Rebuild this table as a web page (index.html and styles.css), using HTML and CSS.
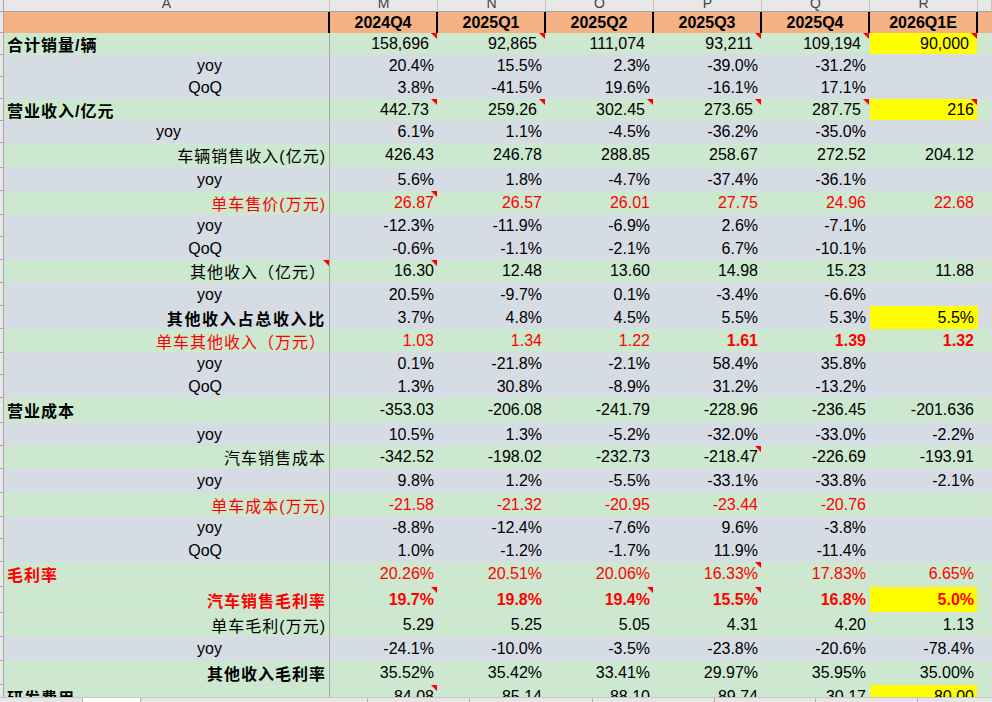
FILE: index.html
```html
<!DOCTYPE html>
<html lang="zh-CN">
<head>
<meta charset="utf-8">
<title>Sheet</title>
<link rel="stylesheet" href="styles.css">
</head>
<body>
<div class="app">
  <div class="sheet">
    <div class="row colhead">
      <div class="rh"></div>
      <div class="c"><span>A</span></div>
      <div class="c"><span>M</span></div>
      <div class="c"><span>N</span></div>
      <div class="c"><span>O</span></div>
      <div class="c"><span>P</span></div>
      <div class="c"><span>Q</span></div>
      <div class="c"><span>R</span></div>
      <div class="c"></div>
    </div>
    <div class="row head">
      <div class="rh"></div>
      <div class="c"></div>
      <div class="c">2024Q4</div>
      <div class="c">2025Q1</div>
      <div class="c">2025Q2</div>
      <div class="c">2025Q3</div>
      <div class="c">2025Q4</div>
      <div class="c">2026Q1E</div>
      <div class="c"></div>
    </div>

    <div class="row g h22">
      <div class="rh"></div>
      <div class="c bl">合计销量/辆</div>
      <div class="c p8 t">158,696</div>
      <div class="c p8 t">92,865</div>
      <div class="c p8">111,074</div>
      <div class="c p8 t">93,211</div>
      <div class="c p8 t">109,194</div>
      <div class="c p8 t yl">90,000</div>
      <div class="c"></div>
    </div>
    <div class="row b h22">
      <div class="rh"></div>
      <div class="c y1">yoy</div>
      <div class="c">20.4%</div>
      <div class="c">15.5%</div>
      <div class="c">2.3%</div>
      <div class="c">-39.0%</div>
      <div class="c">-31.2%</div>
      <div class="c"></div>
      <div class="c"></div>
    </div>
    <div class="row b h22">
      <div class="rh"></div>
      <div class="c y1">QoQ</div>
      <div class="c">3.8%</div>
      <div class="c">-41.5%</div>
      <div class="c">19.6%</div>
      <div class="c">-16.1%</div>
      <div class="c">17.1%</div>
      <div class="c"></div>
      <div class="c"></div>
    </div>
    <div class="row g h22">
      <div class="rh"></div>
      <div class="c bl">营业收入/亿元</div>
      <div class="c p8 t">442.73</div>
      <div class="c p8 t">259.26</div>
      <div class="c p8 t">302.45</div>
      <div class="c p8 t">273.65</div>
      <div class="c p8 t">287.75</div>
      <div class="c t yl">216</div>
      <div class="c"></div>
    </div>
    <div class="row b h22">
      <div class="rh"></div>
      <div class="c y2">yoy</div>
      <div class="c">6.1%</div>
      <div class="c">1.1%</div>
      <div class="c">-4.5%</div>
      <div class="c">-36.2%</div>
      <div class="c">-35.0%</div>
      <div class="c"></div>
      <div class="c"></div>
    </div>
    <div class="row g h25">
      <div class="rh"></div>
      <div class="c lr">车辆销售收入(亿元)</div>
      <div class="c">426.43</div>
      <div class="c">246.78</div>
      <div class="c">288.85</div>
      <div class="c">258.67</div>
      <div class="c">272.52</div>
      <div class="c">204.12</div>
      <div class="c"></div>
    </div>
    <div class="row b h23">
      <div class="rh"></div>
      <div class="c y1">yoy</div>
      <div class="c">5.6%</div>
      <div class="c">1.8%</div>
      <div class="c">-4.7%</div>
      <div class="c">-37.4%</div>
      <div class="c">-36.1%</div>
      <div class="c"></div>
      <div class="c"></div>
    </div>
    <div class="row g h24 red">
      <div class="rh"></div>
      <div class="c lr">单车售价(万元)</div>
      <div class="c t">26.87</div>
      <div class="c">26.57</div>
      <div class="c">26.01</div>
      <div class="c">27.75</div>
      <div class="c">24.96</div>
      <div class="c">22.68</div>
      <div class="c"></div>
    </div>
    <div class="row b h22">
      <div class="rh"></div>
      <div class="c y1">yoy</div>
      <div class="c">-12.3%</div>
      <div class="c">-11.9%</div>
      <div class="c">-6.9%</div>
      <div class="c">2.6%</div>
      <div class="c">-7.1%</div>
      <div class="c"></div>
      <div class="c"></div>
    </div>
    <div class="row b h23">
      <div class="rh"></div>
      <div class="c y1">QoQ</div>
      <div class="c">-0.6%</div>
      <div class="c">-1.1%</div>
      <div class="c">-2.1%</div>
      <div class="c">6.7%</div>
      <div class="c">-10.1%</div>
      <div class="c"></div>
      <div class="c"></div>
    </div>
    <div class="row g h23">
      <div class="rh"></div>
      <div class="c lr t">其他收入（亿元）</div>
      <div class="c t">16.30</div>
      <div class="c">12.48</div>
      <div class="c">13.60</div>
      <div class="c">14.98</div>
      <div class="c">15.23</div>
      <div class="c">11.88</div>
      <div class="c"></div>
    </div>
    <div class="row b h23">
      <div class="rh"></div>
      <div class="c y1">yoy</div>
      <div class="c">20.5%</div>
      <div class="c">-9.7%</div>
      <div class="c">0.1%</div>
      <div class="c">-3.4%</div>
      <div class="c">-6.6%</div>
      <div class="c"></div>
      <div class="c"></div>
    </div>
    <div class="row b h23">
      <div class="rh"></div>
      <div class="c lr bw">其他收入占总收入比</div>
      <div class="c">3.7%</div>
      <div class="c">4.8%</div>
      <div class="c">4.5%</div>
      <div class="c">5.5%</div>
      <div class="c">5.3%</div>
      <div class="c yl">5.5%</div>
      <div class="c"></div>
    </div>
    <div class="row g h24 red">
      <div class="rh"></div>
      <div class="c lr">单车其他收入（万元）</div>
      <div class="c">1.03</div>
      <div class="c">1.34</div>
      <div class="c">1.22</div>
      <div class="c bo">1.61</div>
      <div class="c bo">1.39</div>
      <div class="c bo">1.32</div>
      <div class="c"></div>
    </div>
    <div class="row b h22">
      <div class="rh"></div>
      <div class="c y1">yoy</div>
      <div class="c">0.1%</div>
      <div class="c">-21.8%</div>
      <div class="c">-2.1%</div>
      <div class="c">58.4%</div>
      <div class="c">35.8%</div>
      <div class="c"></div>
      <div class="c"></div>
    </div>
    <div class="row b h23">
      <div class="rh"></div>
      <div class="c y1">QoQ</div>
      <div class="c">1.3%</div>
      <div class="c">30.8%</div>
      <div class="c">-8.9%</div>
      <div class="c">31.2%</div>
      <div class="c">-13.2%</div>
      <div class="c"></div>
      <div class="c"></div>
    </div>
    <div class="row g h25">
      <div class="rh"></div>
      <div class="c bl">营业成本</div>
      <div class="c">-353.03</div>
      <div class="c">-206.08</div>
      <div class="c">-241.79</div>
      <div class="c">-228.96</div>
      <div class="c">-236.45</div>
      <div class="c">-201.636</div>
      <div class="c"></div>
    </div>
    <div class="row b h23">
      <div class="rh"></div>
      <div class="c y1">yoy</div>
      <div class="c">10.5%</div>
      <div class="c">1.3%</div>
      <div class="c">-5.2%</div>
      <div class="c">-32.0%</div>
      <div class="c">-33.0%</div>
      <div class="c">-2.2%</div>
      <div class="c"></div>
    </div>
    <div class="row g h23">
      <div class="rh"></div>
      <div class="c lr">汽车销售成本</div>
      <div class="c">-342.52</div>
      <div class="c">-198.02</div>
      <div class="c">-232.73</div>
      <div class="c t">-218.47</div>
      <div class="c">-226.69</div>
      <div class="c">-193.91</div>
      <div class="c"></div>
    </div>
    <div class="row b h24">
      <div class="rh"></div>
      <div class="c y1">yoy</div>
      <div class="c">9.8%</div>
      <div class="c">1.2%</div>
      <div class="c">-5.5%</div>
      <div class="c">-33.1%</div>
      <div class="c">-33.8%</div>
      <div class="c">-2.1%</div>
      <div class="c"></div>
    </div>
    <div class="row g h24 red">
      <div class="rh"></div>
      <div class="c lr">单车成本(万元)</div>
      <div class="c">-21.58</div>
      <div class="c">-21.32</div>
      <div class="c">-20.95</div>
      <div class="c">-23.44</div>
      <div class="c">-20.76</div>
      <div class="c"></div>
      <div class="c"></div>
    </div>
    <div class="row b h22">
      <div class="rh"></div>
      <div class="c y1">yoy</div>
      <div class="c">-8.8%</div>
      <div class="c">-12.4%</div>
      <div class="c">-7.6%</div>
      <div class="c">9.6%</div>
      <div class="c">-3.8%</div>
      <div class="c"></div>
      <div class="c"></div>
    </div>
    <div class="row b h23">
      <div class="rh"></div>
      <div class="c y1">QoQ</div>
      <div class="c">1.0%</div>
      <div class="c">-1.2%</div>
      <div class="c">-1.7%</div>
      <div class="c">11.9%</div>
      <div class="c">-11.4%</div>
      <div class="c"></div>
      <div class="c"></div>
    </div>
    <div class="row g h25 red">
      <div class="rh"></div>
      <div class="c bl">毛利率</div>
      <div class="c">20.26%</div>
      <div class="c">20.51%</div>
      <div class="c">20.06%</div>
      <div class="c t">16.33%</div>
      <div class="c">17.83%</div>
      <div class="c">6.65%</div>
      <div class="c"></div>
    </div>
    <div class="row g h26 red bold">
      <div class="rh"></div>
      <div class="c lr">汽车销售毛利率</div>
      <div class="c t">19.7%</div>
      <div class="c">19.8%</div>
      <div class="c t">19.4%</div>
      <div class="c t">15.5%</div>
      <div class="c">16.8%</div>
      <div class="c yl">5.0%</div>
      <div class="c"></div>
    </div>
    <div class="row g h24">
      <div class="rh"></div>
      <div class="c lr">单车毛利(万元)</div>
      <div class="c">5.29</div>
      <div class="c">5.25</div>
      <div class="c">5.05</div>
      <div class="c">4.31</div>
      <div class="c">4.20</div>
      <div class="c">1.13</div>
      <div class="c"></div>
    </div>
    <div class="row b h24">
      <div class="rh"></div>
      <div class="c y1">yoy</div>
      <div class="c">-24.1%</div>
      <div class="c">-10.0%</div>
      <div class="c">-3.5%</div>
      <div class="c">-23.8%</div>
      <div class="c">-20.6%</div>
      <div class="c">-78.4%</div>
      <div class="c"></div>
    </div>
    <div class="row g h24">
      <div class="rh"></div>
      <div class="c lr bo">其他收入毛利率</div>
      <div class="c">35.52%</div>
      <div class="c">35.42%</div>
      <div class="c">33.41%</div>
      <div class="c">29.97%</div>
      <div class="c">35.95%</div>
      <div class="c">35.00%</div>
      <div class="c"></div>
    </div>
    <div class="row g h24">
      <div class="rh"></div>
      <div class="c bl">研发费用</div>
      <div class="c t">84.08</div>
      <div class="c">85.14</div>
      <div class="c">88.10</div>
      <div class="c">89.74</div>
      <div class="c">30.17</div>
      <div class="c yl">80.00</div>
      <div class="c"></div>
    </div>
  </div>
  <div class="tabs">
    <div class="tab w82"></div>
    <div class="tab active w58"></div>
    <div class="tab w228"></div>
    <div class="tab w102"></div>
    <div class="tab w123"></div>
    <div class="tab w122"></div>
    <div class="tab w101"></div>
    <div class="tab w102"></div>
    <div class="tab rest"></div>
  </div>
</div>
</body>
</html>
```

FILE: styles.css
```css
html, body {
  margin: 0;
  padding: 0;
  background: #ffffff;
}

body {
  font-family: "Liberation Sans", "Noto Sans CJK SC", sans-serif;
  font-size: 16px;
  color: #000;
}

.app {
  width: 992px;
  height: 702px;
  display: flex;
  flex-direction: column;
  overflow: hidden;
}

.sheet {
  flex: 1;
  overflow: hidden;
}

.row {
  display: grid;
  grid-template-columns: 4px 326px repeat(6, 108px) 1fr;
}

.row > div {
  box-sizing: border-box;
  position: relative;
  display: flex;
  align-items: center;
  justify-content: flex-end;
  padding-right: 3px;
  white-space: nowrap;
  overflow: hidden;
  border-right: 1px solid transparent;
}

/* row header strip at the far left */
.row > .rh {
  background: #e8e8e8;
  border-right: 1px solid #a6a6a6;
  border-bottom: 1px solid #a6a6a6;
  padding: 0;
}

/* column letter bar */
.colhead {
  height: 12px;
  background: #e8e8e8;
}
.colhead > div {
  border-bottom: 1px solid #a6a6a6;
  border-right: 1px solid #c4c4c4;
  justify-content: center;
  align-items: flex-start;
  padding: 0;
  color: #444;
  font-size: 14px;
}
.colhead > div span {
  display: block;
  line-height: 11px;
  margin-top: -2px;
}

/* orange header row */
.head {
  height: 21px;
  background: #f4b183;
  font-weight: bold;
}
.head > div {
  justify-content: center;
  padding: 0;
  border-right: 2px solid #000;
}
.head > div:last-child {
  border-right: none;
}

/* body rows */
.g {
  background: #cce8cf;
}
.g > div {
  border-right-color: #d9dcd9;
  border-bottom: 1px solid #d9dcd9;
}
.b {
  background: #d6dce4;
}

.row > div:nth-child(2) {
  border-right: 1px solid #a6a6a6;
}
.colhead > div:nth-child(2) {
  border-right: 1px solid #c4c4c4;
}
.head > div:nth-child(2) {
  border-right: 2px solid #000;
}

.h22 { height: 22px; }
.h23 { height: 23px; }
.h24 { height: 24px; }
.h25 { height: 25px; }
.h26 { height: 26px; }

.red { color: #ff0000; }
.bold { font-weight: bold; }
.bo { font-weight: bold; }

/* label styles */
.bl {
  justify-content: flex-start !important;
  padding-left: 3px;
  font-weight: bold;
  letter-spacing: 1px;
}
.lr {
  letter-spacing: 1px;
}
.bw {
  font-weight: bold;
  letter-spacing: 1.7px;
}
.y1 {
  padding-right: 107px !important;
}
.y2 {
  padding-right: 148px !important;
}

.p8 {
  padding-right: 8px !important;
}

.yl {
  background: #ffff00;
}

/* comment indicator */
.t::after {
  content: "";
  position: absolute;
  top: 0;
  right: 0;
  width: 0;
  height: 0;
  border-top: 6px solid #ff0000;
  border-left: 6px solid transparent;
}

/* sheet tab strip */
.tabs {
  height: 5px;
  display: flex;
  background: #e6e6e6;
  border-top: 1px solid #c6c6c6;
  box-sizing: border-box;
}
.tab {
  box-sizing: border-box;
  border-right: 1px solid #b0b0b0;
}
.tab.active {
  background: #ffffff;
}
.w82 { width: 83px; }
.w58 { width: 58px; }
.w228 { width: 227px; }
.w102 { width: 102px; }
.w123 { width: 123px; }
.w122 { width: 122px; }
.w101 { width: 101px; }
.rest { flex: 1; border-right: none; }
```
